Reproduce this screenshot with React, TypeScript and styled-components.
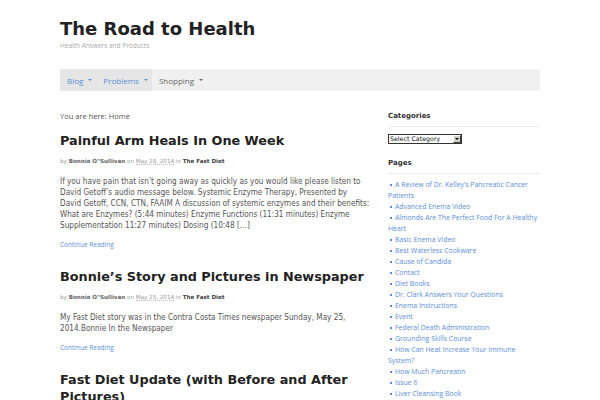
import React from "react";
import styled, { createGlobalStyle } from "styled-components";

const Global = createGlobalStyle`
  html, body { margin: 0; padding: 0; background: #fff; }
  body { font-family: "Open Sans", "DejaVu Sans", sans-serif; color: #555; overflow: hidden; }
  a { text-decoration: none; }
`;

const Page = styled.div`
  width: 480px;
  margin: 0 auto;
`;

const Header = styled.header`
  padding-top: 20px;
  height: 49px;
  box-sizing: border-box;
`;

const SiteTitle = styled.h1`
  margin: 0;
  font-family: "DejaVu Sans", sans-serif;
  font-weight: bold;
  font-size: 18px;
  line-height: 18px;
  color: #222;
`;

const Tagline = styled.div`
  margin-top: 3px;
  font-family: "Open Sans", sans-serif;
  font-size: 6.5px;
  color: #aaa;
`;

const Nav = styled.nav`
  display: flex;
  height: 22px;
  background: #f0f0f0;
  margin-top: 20px;
`;

const NavItem = styled.a<{ $active?: boolean }>`
  display: flex;
  align-items: center;
  gap: 5px;
  padding: 0 4px 0 7px;
  font-family: "Open Sans", sans-serif;
  font-size: 8px;
  color: ${(p) => (p.$active ? "#5b8ed8" : "#666")};
  background: ${(p) => (p.$active ? "#e6e6e6" : "transparent")};
`;

const Caret = styled.span`
  width: 0;
  height: 0;
  border-left: 2px solid transparent;
  border-right: 2px solid transparent;
  border-top: 2px solid currentColor;
`;

const Layout = styled.div`
  display: grid;
  grid-template-columns: 310px 152px;
  column-gap: 18px;
  margin-top: 20px;
`;

const Main = styled.main``;

const Crumbs = styled.div`
  font-family: "Open Sans", sans-serif;
  font-size: 7.5px;
  line-height: 10px;
  color: #555;
`;

const Post = styled.article`
  margin-top: 11px;
  & + & {
    margin-top: 18px;
  }
`;

const PostTitle = styled.h2`
  margin: 0;
  font-family: "DejaVu Sans", sans-serif;
  font-weight: bold;
  font-size: 12.8px;
  line-height: 17px;
  color: #222;
`;

const Meta = styled.div`
  margin-top: 8px;
  font-family: "DejaVu Sans", sans-serif;
  font-size: 5.6px;
  line-height: 8px;
  color: #999;
`;

const Author = styled.span`
  font-weight: bold;
  color: #666;
`;

const DateText = styled.span`
  border-bottom: 1px dotted #bbb;
`;

const Cat = styled.span`
  font-weight: bold;
  color: #444;
`;

const Excerpt = styled.p`
  margin: 11px 0 0;
  width: 310px;
  font-family: "DejaVu Sans Condensed", "DejaVu Sans", sans-serif;
  font-stretch: condensed;
  font-size: 8.13px;
  line-height: 11px;
  color: #555;
`;

const More = styled.a`
  display: block;
  margin-top: 9px;
  font-family: "Open Sans", sans-serif;
  font-size: 6.5px;
  line-height: 10px;
  color: #5b8ed8;
`;

const Sidebar = styled.aside``;

const WidgetTitle = styled.h3`
  margin: 0;
  padding-bottom: 5px;
  border-bottom: 1px solid #eee;
  font-family: "DejaVu Sans", sans-serif;
  font-weight: bold;
  font-size: 7px;
  line-height: 10px;
  color: #333;
`;

const Widget = styled.section`
  & + & {
    margin-top: 14px;
  }
`;

const FakeSelect = styled.div`
  margin-top: 7px;
  width: 74px;
  height: 10px;
  box-sizing: border-box;
  display: flex;
  align-items: center;
  border: 1px solid #333;
  background: #fff;
`;

const SelectText = styled.span`
  flex: 1;
  padding-left: 1px;
  font-family: "DejaVu Sans", sans-serif;
  font-size: 6.3px;
  line-height: 8px;
  color: #111;
  white-space: nowrap;
`;

const SelectBtn = styled.span`
  width: 8px;
  height: 8px;
  box-sizing: border-box;
  background: #d4d0c8;
  border: 1px solid;
  border-color: #fff #404040 #404040 #fff;
  display: flex;
  align-items: center;
  justify-content: center;
  &::after {
    content: "";
    border-left: 2px solid transparent;
    border-right: 2px solid transparent;
    border-top: 2px solid #000;
  }
`;

const PageList = styled.ul`
  margin: 5px 0 0;
  padding: 0;
  list-style: none;
`;

const PageItem = styled.li`
  font-family: "Open Sans", sans-serif;
  font-size: 6.9px;
  line-height: 11px;
  color: #5b8ed8;
  &::before {
    content: "";
    display: inline-block;
    width: 2px;
    height: 2px;
    background: #5b8ed8;
    margin: 0 3px 1px 2px;
    vertical-align: middle;
  }
`;

const pages = [
  "A Review of Dr. Kelley’s Pancreatic Cancer Patients",
  "Advanced Enema Video",
  "Almonds Are The Perfect Food For A Healthy Heart",
  "Basic Enema Video",
  "Best Waterless Cookware",
  "Cause of Candida",
  "Contact",
  "Diet Books",
  "Dr. Clark Answers Your Questions",
  "Enema Instructions",
  "Event",
  "Federal Death Administration",
  "Grounding Skills Course",
  "How Can Heat Increase Your Immune System?",
  "How Much Pancreatin",
  "Issue 6",
  "Liver Cleansing Book",
];

type PostData = { title: string; date?: string; text?: string };

const posts: PostData[] = [
  {
    title: "Painful Arm Heals In One Week",
    date: "May 28, 2014",
    text: "If you have pain that isn’t going away as quickly as you would like please listen to David Getoff’s audio message below. Systemic Enzyme Therapy, Presented by David Getoff, CCN, CTN, FAAIM A discussion of systemic enzymes and their benefits: What are Enzymes? (5:44 minutes) Enzyme Functions (11:31 minutes) Enzyme Supplementation 11:27 minutes) Dosing (10:48 […]",
  },
  {
    title: "Bonnie’s Story and Pictures in Newspaper",
    date: "May 25, 2014",
    text: "My Fast Diet story was in the Contra Costa Times newspaper Sunday, May 25, 2014.Bonnie In the Newspaper",
  },
  {
    title: "Fast Diet Update (with Before and After Pictures)",
  },
];

export default function App() {
  return (
    <>
      <Global />
      <Page>
        <Header>
          <SiteTitle>The Road to Health</SiteTitle>
          <Tagline>Health Answers and Products</Tagline>
        </Header>
        <Nav>
          <NavItem $active>
            Blog <Caret />
          </NavItem>
          <NavItem $active>
            Problems <Caret />
          </NavItem>
          <NavItem>
            Shopping <Caret />
          </NavItem>
        </Nav>
        <Layout>
          <Main>
            <Crumbs>You are here: Home</Crumbs>
            {posts.map((p) => (
              <Post key={p.title}>
                <PostTitle>{p.title}</PostTitle>
                {p.date && (
                  <Meta>
                    by <Author>Bonnie O"Sullivan</Author> on <DateText>{p.date}</DateText> in{" "}
                    <Cat>The Fast Diet</Cat>
                  </Meta>
                )}
                {p.text && <Excerpt>{p.text}</Excerpt>}
                {p.text && <More>Continue Reading</More>}
              </Post>
            ))}
          </Main>
          <Sidebar>
            <Widget>
              <WidgetTitle>Categories</WidgetTitle>
              <FakeSelect>
                <SelectText>Select Category</SelectText>
                <SelectBtn />
              </FakeSelect>
            </Widget>
            <Widget>
              <WidgetTitle>Pages</WidgetTitle>
              <PageList>
                {pages.map((t) => (
                  <PageItem key={t}>{t}</PageItem>
                ))}
              </PageList>
            </Widget>
          </Sidebar>
        </Layout>
      </Page>
    </>
  );
}
